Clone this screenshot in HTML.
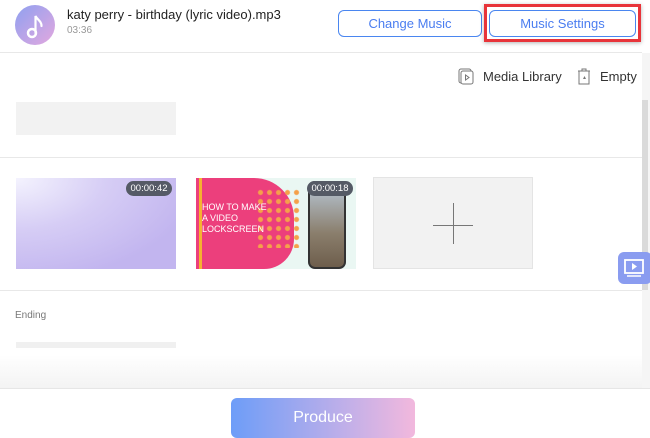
<!DOCTYPE html>
<html><head><meta charset="utf-8"><style>
*{margin:0;padding:0;box-sizing:border-box}
body{width:650px;height:430px;overflow:hidden;background:#fff;font-family:"Liberation Sans",sans-serif;position:relative}
.a{position:absolute}
.btn{position:absolute;top:10px;height:27px;border:1px solid #4a86f0;border-radius:6px;color:#4a7df0;font-size:13px;text-align:center;line-height:25px}
</style></head><body>
<div class="a" style="left:15px;top:5px;width:40px;height:40px;border-radius:50%;background:linear-gradient(135deg,#8fa0f0,#e3a8df)">
<svg width="40" height="40" viewBox="0 0 40 40"><circle cx="17" cy="28" r="4" fill="none" stroke="#fff" stroke-width="2.5"/><path d="M20.5 28V11c2 4 6 5 6 10" fill="none" stroke="#fff" stroke-width="2.2" stroke-linecap="round"/></svg></div>
<div class="a" style="left:67px;top:7px;font-size:13px;color:#222">katy perry - birthday (lyric video).mp3</div>
<div class="a" style="left:67px;top:25px;font-size:10px;color:#999">03:36</div>
<div class="btn" style="left:338px;width:144px">Change Music</div>
<div class="a" style="left:484px;top:4px;width:157px;height:38px;border:3px solid #e8343a;box-shadow:0 1px 4px rgba(0,0,0,.3)"></div>
<div class="btn" style="left:489px;width:147px">Music Settings</div>
<div class="a" style="left:0;top:52px;width:642px;height:1px;background:#e8e8e8"></div>
<svg class="a" style="left:458px;top:68px" width="16" height="17"><rect x="1" y="1" width="12" height="14" rx="2" fill="none" stroke="#777"/><rect x="3" y="3" width="12" height="13" rx="2" fill="#fff" stroke="#777"/><path d="M7.5 7v5l3.5-2.5z" fill="none" stroke="#777"/></svg>
<div class="a" style="left:483px;top:69px;font-size:13px;color:#333">Media Library</div>
<svg class="a" style="left:576px;top:68px" width="16" height="17"><path d="M2 3h12M6 3V1h4v2M3 3v13h10V3" fill="none" stroke="#777"/><path d="M7 11l1.5-3 1.5 3z" fill="#777"/></svg>
<div class="a" style="left:600px;top:69px;font-size:13px;color:#333">Empty</div>
<div class="a" style="left:16px;top:102px;width:160px;height:33px;background:#f2f2f2"></div>
<div class="a" style="left:0;top:157px;width:642px;height:1px;background:#e8e8e8"></div>
<div class="a" style="left:16px;top:178px;width:160px;height:91px;background:radial-gradient(ellipse at 0 0,#f4f3fe 0,#d6cdf5 40%,#c2b5ef 80%),#c6baf0"></div>
<div class="a" style="left:126px;top:181px;width:46px;height:15px;border-radius:8px;background:#555a66;color:#fff;font-size:9.5px;text-align:center;line-height:15px">00:00:42</div>
<div class="a" style="left:196px;top:178px;width:160px;height:91px;background:#eaf7f3;overflow:hidden">
<div class="a" style="left:0;top:0;width:98px;height:91px;background:#ec3f7c;border-radius:0 40px 30px 0"></div>
<div class="a" style="left:3px;top:0;width:3px;height:91px;background:#f5b230"></div>
<div class="a" style="left:60px;top:10px;width:45px;height:60px;background:radial-gradient(circle,#f5a04a 2px,transparent 3px) 0 0/9px 9px"></div>
<div class="a" style="left:6px;top:24px;color:#fff;font-size:9px;line-height:11px">HOW TO MAKE<br>A VIDEO<br>LOCKSCREEN</div>
<div class="a" style="left:112px;top:3px;width:38px;height:88px;border-radius:7px;background:linear-gradient(#b8c7d6,#8a7e6c 60%,#6e5e4c);border:2px solid #333"></div>
</div>
<div class="a" style="left:307px;top:181px;width:46px;height:15px;border-radius:8px;background:#555a66;color:#fff;font-size:9.5px;text-align:center;line-height:15px">00:00:18</div>
<div class="a" style="left:373px;top:177px;width:160px;height:92px;background:#f2f2f2;border:1px solid #e4e4e4"></div>
<div class="a" style="left:433px;top:225px;width:40px;height:1px;background:#777"></div>
<div class="a" style="left:453px;top:203px;width:1px;height:41px;background:#777"></div>
<div class="a" style="left:0;top:290px;width:642px;height:1px;background:#e8e8e8"></div>
<div class="a" style="left:15px;top:310px;font-size:10px;color:#777">Ending</div>
<div class="a" style="left:16px;top:342px;width:160px;height:6px;background:#f0f0f0"></div>
<div class="a" style="left:0;top:355px;width:642px;height:33px;background:linear-gradient(#fff,#f3f3f3)"></div>
<div class="a" style="left:0;top:388px;width:650px;height:1px;background:#e6e6e6"></div>
<div class="a" style="left:642px;top:53px;width:8px;height:335px;background:#f5f5f5"></div>
<div class="a" style="left:642px;top:100px;width:6px;height:190px;background:#dadada"></div>
<div class="a" style="left:618px;top:252px;width:34px;height:32px;border-radius:6px;background:#8a9cf0">
<svg width="32" height="32"><rect x="7" y="8" width="18" height="13" fill="none" stroke="#fff" stroke-width="1.8"/><path d="M14 11v7l5-3.5z" fill="#fff"/><path d="M9 24h14" stroke="#fff" stroke-width="1.5"/></svg></div>
<div class="a" style="left:231px;top:398px;width:184px;height:40px;border-radius:6px;background:linear-gradient(90deg,#6d9df8,#c4b0e8 65%,#f2b8dd);color:#fff;font-size:16px;text-align:center;line-height:40px">Produce</div>
</body></html>
